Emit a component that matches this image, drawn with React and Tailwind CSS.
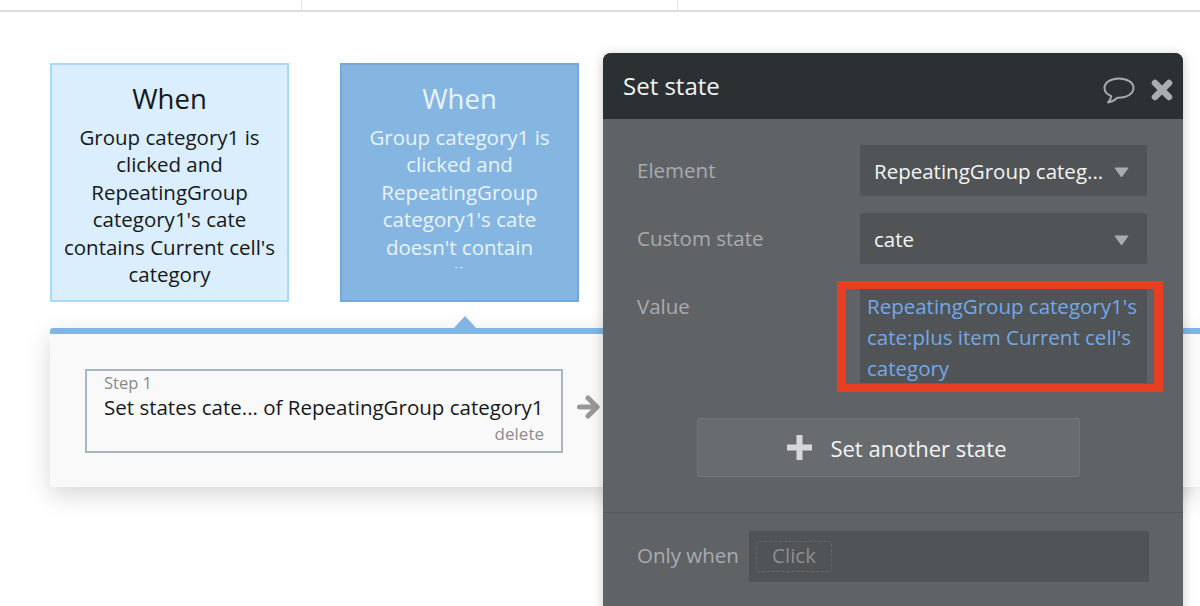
import React from 'react';

const Caret = () => (
    <svg width="15" height="11" viewBox="0 0 15 11" className="absolute left-[254px] top-[22px]">
        <path d="M1 1h13L7.5 10z" fill="#a9acae" stroke="#a9acae" strokeLinejoin="round" />
    </svg>
);

const SelectRow = ({ label, value, className }) => (
    <div className={`flex items-center ${className}`}>
        <div className="w-[257px] pb-[1px] pl-[34px] text-[#a7abad]">{label}</div>
        <div className="relative h-[51px] w-[287px] rounded-[2px] bg-[#505456] pl-[14px] leading-[52px] text-[#f4f5f5]">
            {value}
            <Caret />
        </div>
    </div>
);

const WhenCard = ({ active, children }) => (
    <div className={`h-[239px] w-[239px] border-2 px-[10px] text-center ${active ? 'border-[#74a8d9] bg-[#85b6e1] text-[#e8f3fb]' : 'border-[#a9d9f8] bg-[#dbeefe] text-[#14181b]'}`}>
        <div className="mt-[14px] text-[27.5px] leading-[40px]">When</div>
        <div className="mt-[5px] h-[189px] overflow-hidden leading-[27.4px]">
            {active ? <div className="h-[144px] overflow-hidden">{children}</div> : children}
        </div>
    </div>
);

export default function App() {
    return (
        <div className="relative h-[606px] w-[1200px] overflow-hidden bg-white font-['Open_Sans',sans-serif] text-[20.5px]">
            {/* top tabs */}
            <div className="flex h-[12px] border-b-2 border-[#dcdcdc]">
                <div className="w-[302px] border-r border-[#e6e6e6]" />
                <div className="w-[376px] border-r border-[#e6e6e6]" />
            </div>

            {/* event cards */}
            <div className="ml-[50px] mt-[51px] flex gap-[51px]">
                <WhenCard>Group category1 is clicked and RepeatingGroup category1's cate contains Current cell's category</WhenCard>
                <WhenCard active>Group category1 is clicked and RepeatingGroup category1's cate doesn't contain Current cell's category</WhenCard>
            </div>

            {/* steps strip */}
            <div className="relative ml-[50px] mt-[26px] h-[159px] rounded-l-[3px] border-t-[6px] border-[#82b5e3] bg-[#f9f9fa] shadow-[0_8px_24px_rgba(0,0,0,0.16)]">
                <svg width="26" height="13" viewBox="0 0 26 13" className="absolute left-[402px] top-[-18px]">
                    <path d="M1 13 13 0l12 13z" fill="#82b5e3" />
                </svg>
                <div className="ml-[35px] mt-[35px] flex">
                    <div className="h-[84px] w-[478px] border-2 border-[#aab8be] pl-[17px] pr-[17px] pt-[1px]">
                        <div className="text-[16.5px] leading-[22px] text-[#85898b]">Step 1</div>
                        <div className="whitespace-nowrap leading-[27px] text-[#15191c]">Set states cate... of RepeatingGroup category1</div>
                        <div className="text-right text-[17px] leading-[26px] text-[#8a8d8f]">delete</div>
                    </div>
                    <svg width="23" height="24" viewBox="0 0 23 24" className="ml-[14px] mt-[26px]">
                        <path d="M2.5 12h16M11 3l9 9-9 9" fill="none" stroke="#979797" strokeWidth="5" strokeLinecap="round" strokeLinejoin="round" />
                    </svg>
                </div>
            </div>

            {/* floating editor */}
            <div className="absolute left-[603px] top-[53px] h-[560px] w-[580px] rounded-t-[8px] bg-[#5f6366] shadow-[0_2px_12px_rgba(0,0,0,0.22)]">
                <div className="relative flex h-[66px] items-center rounded-t-[8px] bg-[#2b3033] pl-[20px] text-[24px] text-[#f3f4f4]">
                    Set state
                    <svg width="32" height="27" viewBox="0 0 32 27" className="absolute left-[500px] top-[24px]">
                        <path d="M16 1.5C8 1.5 1.5 5.5 1.5 11c0 3.500 2.700 6.500 6.800 8.100-.3 2.300-1.500 4.500-3.300 6.300 3.800-.6 7-2.300 9.400-4.700.5 0 1.100.1 1.600.1 8 0 14.500-4.300 14.500-9.800S24 1.500 16 1.500z" fill="none" stroke="#a5a9ab" strokeWidth="2" strokeLinejoin="round" />
                    </svg>
                    <svg width="22" height="22" viewBox="0 0 22 22" className="absolute left-[548px] top-[26px]">
                        <path d="M4 4l14 14M18 4 4 18" stroke="#a9adaf" strokeWidth="6.500" strokeLinecap="round" />
                    </svg>
                </div>

                <SelectRow className="mt-[26px]" label="Element" value="RepeatingGroup categ..." />
                <SelectRow className="mt-[17px]" label="Custom state" value="cate" />

                <div className="relative mt-[25px] flex">
                    <div className="w-[257px] pl-[34px] pt-[2px] text-[#a7abad]">Value</div>
                    <div className="h-[94px] w-[287px] bg-[#505456] pl-[7px] pt-[2px] leading-[31px] text-[#73a9e6]">
                        RepeatingGroup category1's cate:plus item Current cell's category
                    </div>
                    {/* annotation */}
                    <div className="pointer-events-none absolute left-[234px] top-[-8px] h-[111px] w-[326px] border-y-[8px] border-x-[9px] border-[#e83f23]" />
                </div>

                <div className="ml-[94px] mt-[35px] flex h-[59px] w-[383px] items-center justify-center gap-[18px] rounded-[3px] border border-[#71767a] bg-[#686c6f] pl-[17px] text-[#f4f5f5]">
                    <svg width="25" height="25" viewBox="0 0 25 25">
                        <path d="M12.500 0v25M0 12.500h25" stroke="#d6d7d8" strokeWidth="6" />
                    </svg>
                    <span className="pt-[2px] text-[22px]">Set another state</span>
                </div>

                <div className="mt-[35px] flex items-center border-t border-[#55595c] pl-[34px] pt-[18px]">
                    <div className="w-[112px] whitespace-nowrap pb-[2px] text-[#a7abad]">Only when</div>
                    <div className="flex h-[51px] w-[400px] items-center bg-[#505456] pl-[7px]">
                        <div className="flex h-[31px] w-[76px] items-center justify-center rounded-[3px] border border-dashed border-[#66696c] pb-[2px] text-[#8b8f91]">Click</div>
                    </div>
                </div>
            </div>
        </div>
    );
}
